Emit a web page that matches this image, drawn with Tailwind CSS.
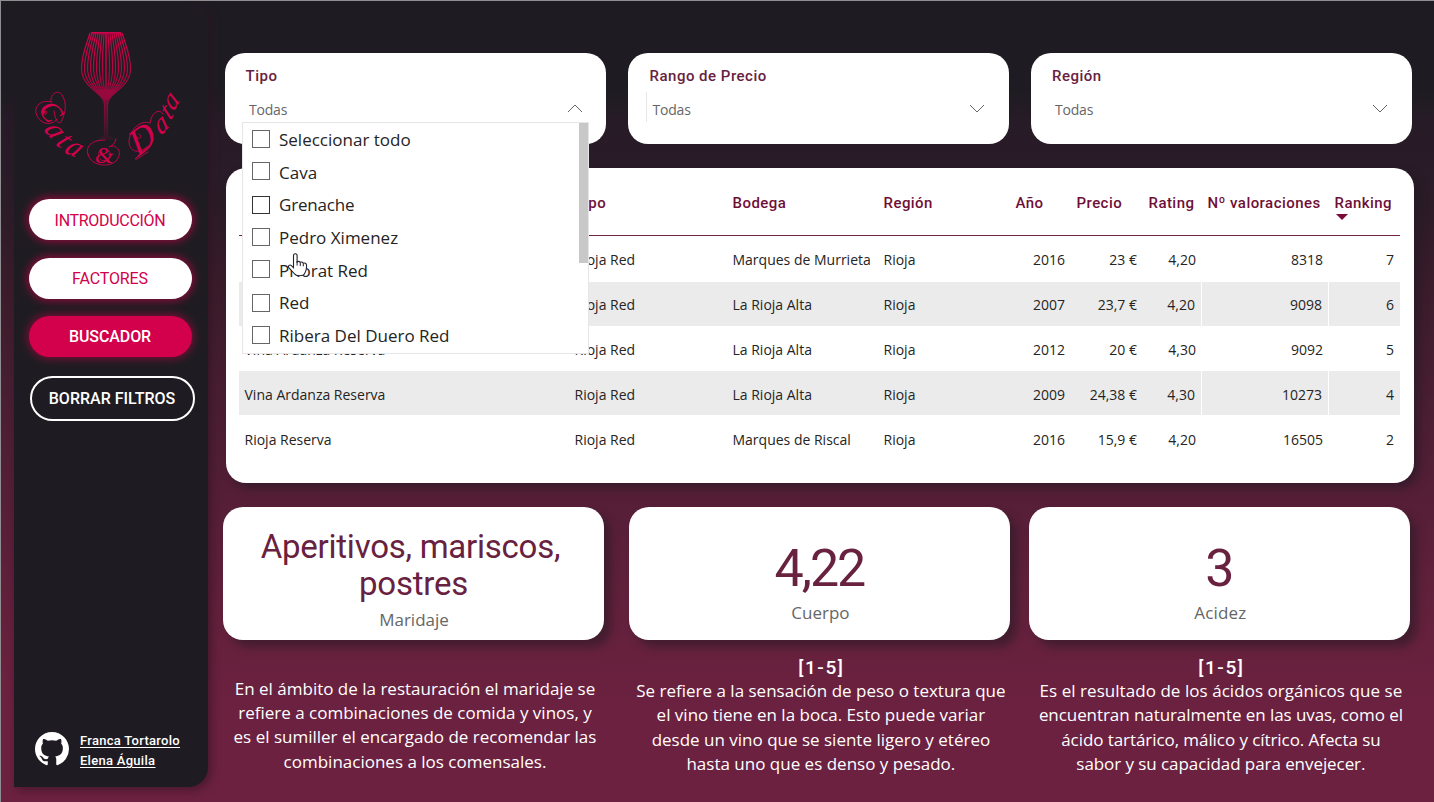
<!DOCTYPE html>
<html lang="es">
<head>
<meta charset="utf-8">
<title>Cata &amp; Data – Buscador</title>
<script src="https://cdn.jsdelivr.net/npm/@tailwindcss/browser@4"></script>
</head>
<body class="h-[802px] w-[1434px] overflow-hidden">
<div class="relative flex h-[802px] w-[1434px] overflow-hidden border-l border-t border-[#8f8f92] bg-[linear-gradient(180deg,#1e1c22_0px,#1e1c22_90px,#271b27_120px,#2b1c28_200px,#3a1c2b_280px,#4a1e33_400px,#581f38_520px,#66213d_640px,#6c2140_720px,#6c2140_802px)] font-['Open_Sans','Noto_Sans',sans-serif]">

  <!-- Sidebar -->
  <aside class="ml-[13px] flex h-[786px] w-[194px] shrink-0 flex-col rounded-br-[20px] rounded-tr-[20px] bg-[#1e1c22] font-['Roboto',sans-serif] shadow-[3px_3px_10px_rgba(45,18,34,0.6)]">
    <svg class="h-[184px] w-[194px] shrink-0" viewBox="14 1 194 184" fill="none">
      <defs>
        <linearGradient id="g" x1="0" y1="30" x2="0" y2="140" gradientUnits="userSpaceOnUse"><stop offset="0" stop-color="#d3004b"/><stop offset=".45" stop-color="#ad0541"/><stop offset=".65" stop-color="#8f0a3c"/><stop offset="1" stop-color="#35182a"/></linearGradient>
      </defs>
      <g stroke="url(#g)" stroke-width="1.200">
        <path d="M91 32.800H121" stroke-width="1.600"/>
        <path d="M90 33C86 46 81 56 81.500 70C82.500 85 97 91 104.500 100V134"/>
        <path d="M92 33C88.500 46 84 56 84.500 70C85.500 85 99 91 104.800 100"/>
        <path d="M94 33C91 46 87 56 87.500 70C88.500 85 100 91 105 100"/>
        <path d="M96 33C93.500 46 90 56 90.500 70C91.500 85 101 91 105 100"/>
        <path d="M98 33C96 46 93 56 93.500 70C94.500 85 102 91 105.400 100"/>
        <path d="M100 33C98.500 46 96 56 96.500 70C97 85 103 91 105.600 100"/>
        <path d="M102 33C101 46 99 56 99.500 70C100 85 104 91 105.800 100"/>
        <path d="M104 33C103.500 46 102 56 102.500 70C102.500 85 105 91 106 100"/>
        <path d="M122 33C126 46 131 56 130.500 70C129.500 85 115 91 107.500 100V134"/>
        <path d="M120 33C123.500 46 128 56 127.500 70C126.500 85 113 91 107.200 100"/>
        <path d="M118 33C121 46 125 56 124.500 70C123.500 85 112 91 107 100"/>
        <path d="M116 33C118.500 46 122 56 121.500 70C120.500 85 111 91 107 100"/>
        <path d="M114 33C116 46 119 56 118.500 70C117.500 85 110 91 106.600 100"/>
        <path d="M112 33C113.500 46 116 56 115.500 70C115 85 109 91 106.400 100"/>
        <path d="M110 33C111 46 113 56 112.500 70C112 85 108 91 106.200 100"/>
        <path d="M108 33C108.500 46 110 56 109.500 70C109.500 85 107 91 106 100"/>
        <path d="M106 33V96" stroke-width="1.600"/>
      </g>
      <path d="M95 91Q106 87 117 91Q107.500 99 107.500 110L108 134Q110 138 120 141Q106 138 93 141Q102 138 104 134L104.500 110Q104.500 99 95 91Z" fill="url(#g)" opacity=".65"/>
      <g class="font-['Liberation_Serif',serif] italic" fill="#d3004b" text-anchor="middle">
        <text font-size="29" transform="translate(43 117) rotate(54)">C</text>
        <text font-size="29" transform="translate(47.500 135) rotate(46) skewX(-14)">a</text>
        <text font-size="29" transform="translate(57.500 146.500) rotate(34) skewX(-14)">t</text>
        <text font-size="29" transform="translate(69.500 155) rotate(22) skewX(-14)">a</text>
        <text font-size="24" transform="translate(104 162.500)">&amp;</text>
        <text font-size="36" transform="translate(148 149) rotate(-38) skewX(-8)">D</text>
        <text font-size="27" transform="translate(165.500 131) rotate(-48) skewX(-14)">a</text>
        <text font-size="27" transform="translate(172 118) rotate(-56) skewX(-14)">t</text>
        <text font-size="27" transform="translate(177 106) rotate(-62) skewX(-14)">a</text>
      </g>
      <g stroke="#d3004b" stroke-width=".9" stroke-linecap="round">
        <path d="M43 112.500C44 116 49 114 46 110.500M51 101C50 94 58 89 62 95C67 103 66 112 61 122C58 125 55 119 54 111M52 102C43 99 34 105 36 113C39 124 51 127 57 119"/>
        <circle cx="43.500" cy="112" r="1.300" fill="#d3004b"/>
        <path d="M88 155C85 145 93 140 105 140M88 154C90 166 109 168 116 161C123 153 118 145 111 146M109 147Q115 145 116 139M99 156C97 148 105 147 109 151C114 158 104 164 100 159"/>
        <path d="M150 123C152 110 161 109 163 114M150 123C140 119 129 131 129 142C130 153 140 154 148 146M139 134C143 136 139 141 137 137M148 146C143 152 138 156 135 159C138 160 143 154 148 152"/>
      </g>
    </svg>
    <nav class="mt-[14px] flex flex-col pl-[14.500px] text-center text-[16px]">
      <a class="h-[41px] w-[163px] rounded-full bg-white leading-[43px] tracking-[-0.3px] text-[#d3004b] shadow-[0_0_9px_2px_rgba(211,0,75,0.62)]">INTRODUCCIÓN</a>
      <a class="mt-[17.500px] h-[41px] w-[163px] rounded-full bg-white leading-[42px] tracking-[-0.1px] text-[#d3004b] shadow-[0_0_9px_2px_rgba(211,0,75,0.62)]">FACTORES</a>
      <a class="mt-[17.500px] h-[41px] w-[163px] rounded-full bg-[#d3004b] font-medium leading-[41px] tracking-[-0.1px] text-white shadow-[0_0_9px_2px_rgba(211,0,75,0.5)]">BUSCADOR</a>
      <a class="ml-px mt-[19px] h-[45px] w-[165px] rounded-full border-2 border-white font-medium leading-[41px] text-white">BORRAR FILTROS</a>
    </nav>
    <div class="mb-[16px] ml-[21px] mt-auto flex items-center gap-[11px]">
      <svg class="mb-px h-[34px] w-[34px]" viewBox="0 0 16 16" fill="#fff"><path fill-rule="evenodd" d="M8 0C3.580 0 0 3.580 0 8c0 3.540 2.290 6.530 5.470 7.590.4.070.55-.17.55-.38 0-.19-.01-.82-.01-1.490-2.010.37-2.530-.49-2.690-.94-.09-.23-.48-.94-.82-1.130-.28-.15-.68-.52-.01-.53.63-.01 1.080.58 1.230.82.72 1.210 1.870.87 2.330.66.070-.52.28-.87.51-1.070-1.780-.2-3.640-.89-3.640-3.950 0-.87.31-1.590.82-2.150-.08-.2-.36-1.020.08-2.120 0 0 .67-.21 2.200.82.64-.18 1.320-.27 2-.27s1.360.09 2 .27c1.530-1.040 2.200-.82 2.200-.82.44 1.100.16 1.920.08 2.120.51.56.82 1.270.82 2.150 0 3.070-1.870 3.750-3.650 3.950.29.25.54.73.54 1.480 0 1.070-.01 1.930-.01 2.200 0 .21.15.46.55.38A8.010 8.010 0 0 0 16 8c0-4.420-3.580-8-8-8Z"/></svg>
      <div class="flex flex-col pt-[3px] text-[13px] font-medium leading-[20px] tracking-[0.28px] text-white underline underline-offset-2"><a>Franca Tortarolo</a><a>Elena Águila</a></div>
    </div>
  </aside>

  <main class="flex flex-col pt-[52px]">
    <!-- Filters -->
    <section class="ml-[16.500px] flex gap-[22px]">
      <div class="relative h-[90.500px] w-[381.500px] rounded-[20px] bg-white">
        <h2 class="ml-[21px] mt-[12px] font-['Roboto',sans-serif] text-[15px] font-medium leading-[22px] tracking-[0.5px] text-[#68213f]">Tipo</h2>
        <div class="ml-[24.500px] mr-[23px] mt-[12px] flex items-center justify-between text-[14px] leading-[20px] tracking-[-0.2px] text-[#666]"><span class="pt-px">Todas</span>
          <svg class="mb-[2px] h-[9px] w-[16px]" viewBox="0 0 16 9" fill="none" stroke="#666"><path d="M1 8l7-7 7 7"/></svg>
        </div>
        <!-- Open list -->
        <div class="absolute left-[17.500px] top-[69px] z-10 flex h-[232px] w-[347px] justify-between border border-[#e6e6e6] bg-white">
          <ul class="flex flex-col pl-[9px] text-[17px] text-[#252423]">
            <li class="flex h-[32.650px] items-center gap-[9px]"><i class="h-[18px] w-[18px] border border-[#666]"></i>Seleccionar todo</li>
            <li class="flex h-[32.650px] items-center gap-[9px]"><i class="mb-px h-[18px] w-[18px] border border-[#666]"></i><span class="pt-px">Cava</span></li>
            <li class="flex h-[32.650px] items-center gap-[9px]"><i class="mt-px h-[18px] w-[18px] border border-[#333]"></i><span class="pt-px tracking-[-0.2px]">Grenache</span></li>
            <li class="flex h-[32.650px] items-center gap-[9px]"><i class="h-[18px] w-[18px] border border-[#666]"></i><span class="pt-px">Pedro Ximenez</span></li>
            <li class="flex h-[32.650px] items-center gap-[9px]"><i class="mb-px h-[18px] w-[18px] border border-[#666]"></i><span class="pt-px">Priorat Red</span></li>
            <li class="flex h-[32.650px] items-center gap-[9px]"><i class="h-[18px] w-[18px] border border-[#666]"></i>Red</li>
            <li class="flex h-[32.650px] items-center gap-[9px]"><i class="h-[18px] w-[18px] border border-[#666]"></i><span class="pt-px">Ribera Del Duero Red</span></li>
          </ul>
          <div class="h-[140px] w-[9px] bg-[#c8c8c8]"></div>
          <!-- Hand pointer -->
          <svg class="absolute left-[43.500px] top-[129.500px] h-[25px] w-[22px]" viewBox="0 0 22 25"><path d="M6.500 2.500a1.800 1.800 0 0 1 3.600 0V9q1.700-1.300 3.200.3 2-.8 3 .9 2.700-.8 3.200 1.700c.3 4-.2 6-1.700 8.300q-.8 2.600-5.300 2.600-3.800 0-5.300-2.300L2 14.800c-1.500-2 .8-3.600 2.400-2.200l2.100 2Z" fill="#fff" stroke="#222230" stroke-width="1.100"/><path d="M10.100 8v4.500M13.300 9.500V13M16.300 10.300v3" stroke="#222230" stroke-width="1"/></svg>
        </div>
      </div>
      <div class="h-[90.500px] w-[381px] rounded-[20px] bg-white">
        <h2 class="ml-[21.500px] mt-[12px] font-['Roboto',sans-serif] text-[15px] font-medium leading-[22px] tracking-[0.5px] text-[#68213f]">Rango de Precio</h2>
        <div class="ml-[18px] mr-[24px] mt-[5px] flex h-[30px] items-center justify-between border-l border-[#e6e6e6] pb-px pl-[5.500px] pt-[5px] text-[14px] leading-[20px] tracking-[-0.2px] text-[#666]"><span class="pt-px">Todas</span>
          <svg class="mb-[2px] h-[9px] w-[16px]" viewBox="0 0 16 9" fill="none" stroke="#666"><path d="M1 1l7 7 7-7"/></svg>
        </div>
      </div>
      <div class="h-[90.500px] w-[381px] rounded-[20px] bg-white">
        <h2 class="ml-[21px] mt-[12px] font-['Roboto',sans-serif] text-[15px] font-medium leading-[22px] tracking-[0.5px] text-[#68213f]">Región</h2>
        <div class="ml-[24px] mr-[24px] mt-[12px] flex items-center justify-between text-[14px] leading-[20px] tracking-[-0.2px] text-[#666]"><span class="pt-px">Todas</span>
          <svg class="mb-[2px] h-[9px] w-[16px]" viewBox="0 0 16 9" fill="none" stroke="#666"><path d="M1 1l7 7 7-7"/></svg>
        </div>
      </div>
    </section>

    <!-- Wines -->
    <section class="ml-[18px] mt-[24.500px] h-[314.500px] w-[1187.500px] rounded-[20px] bg-white pl-[13px] shadow-[5px_5px_10px_rgba(30,24,34,0.55)]">
      <table class="w-[1161px] table-fixed border-separate border-spacing-0 text-[14px] text-[#252423]">
        <colgroup><col class="w-[330px]"><col class="w-[158px]"><col class="w-[151px]"><col class="w-[132px]"><col class="w-[61px]"><col class="w-[72px]"><col class="w-[59px]"><col class="w-[127px]"><col class="w-[71px]"></colgroup>
        <thead>
          <tr class="h-[68px] text-left font-['Roboto',sans-serif] text-[15px] tracking-[0.45px] text-[#6f0f38] [&>th]:border-b [&>th]:border-[#6f2440] [&>th]:p-0 [&>th]:pl-[5.500px] [&>th]:pt-[3px] [&>th]:font-medium">
            <th></th><th>Tipo</th><th>Bodega</th><th>Región</th><th>Año</th><th>Precio</th><th>Rating</th><th class="whitespace-nowrap">Nº valoraciones</th><th><div class="relative">Ranking<svg class="absolute left-px top-[22px] h-[6px] w-[12px]" viewBox="0 0 12 6" fill="#7a0a38"><path d="M0 0h12L6 6z"/></svg></div></th>
          </tr>
        </thead>
        <tbody class="[&_td]:whitespace-nowrap [&_td]:p-0 [&_td]:pl-[5.500px] [&_td]:pt-[2px] [&_td]:leading-[20px] [&_td:nth-child(n+5)]:pr-[6px] [&_td:nth-child(n+5)]:text-right">
          <tr class="h-[45px]"><td></td><td>Rioja Red</td><td>Marques de Murrieta</td><td>Rioja</td><td>2016</td><td>23 €</td><td>4,20</td><td>8318</td><td>7</td></tr>
          <tr class="h-[45px] [&>td]:border-t [&>td]:border-white [&>td]:bg-[#ebebeb] [&>td:nth-child(7)]:border-r [&>td:nth-child(8)]:border-r"><td></td><td>Rioja Red</td><td>La Rioja Alta</td><td>Rioja</td><td>2007</td><td>23,7 €</td><td>4,20</td><td>9098</td><td>6</td></tr>
          <tr class="h-[45px]"><td>Vina Ardanza Reserva</td><td>Rioja Red</td><td>La Rioja Alta</td><td>Rioja</td><td>2012</td><td>20 €</td><td>4,30</td><td>9092</td><td>5</td></tr>
          <tr class="h-[45px] [&>td]:border-b [&>td]:border-white [&>td]:bg-[#ebebeb] [&>td]:pt-[3px]! [&>td:nth-child(7)]:border-r [&>td:nth-child(8)]:border-r"><td>Vina Ardanza Reserva</td><td>Rioja Red</td><td>La Rioja Alta</td><td>Rioja</td><td>2009</td><td>24,38 €</td><td>4,30</td><td>10273</td><td>4</td></tr>
          <tr class="h-[45px]"><td>Rioja Reserva</td><td>Rioja Red</td><td>Marques de Riscal</td><td>Rioja</td><td>2016</td><td>15,9 €</td><td>4,20</td><td>16505</td><td>2</td></tr>
        </tbody>
      </table>
    </section>

    <!-- Result cards -->
    <section class="ml-[15px] mt-[24px] flex text-center">
      <div class="mr-[25.400px] w-[381px]">
        <div class="h-[133.500px] rounded-[20px] bg-white pt-[21px] shadow-[7px_7px_9px_rgba(44,26,38,0.6)]">
          <p class="pr-[6px] font-['Roboto',sans-serif] text-[33px] leading-[37px] tracking-[-0.25px] text-[#68213f]">Aperitivos, mariscos,</p>
          <p class="font-['Roboto',sans-serif] text-[33px] leading-[37px] tracking-[-0.25px] text-[#68213f]">postres</p>
          <p class="mt-[6px] pl-px text-[17px] leading-[23px] text-[#666]">Maridaje</p>
        </div>
        <p class="mt-[36.800px] whitespace-nowrap pl-[3px] text-[17px] leading-[24.300px] text-white">En el ámbito de la restauración el maridaje se<br>refiere a combinaciones de comida y vinos, y<br>es el sumiller el encargado de recomendar las<br>combinaciones a los comensales.</p>
      </div>
      <div class="mr-[19px] w-[381px]">
        <div class="h-[133.500px] rounded-[20px] bg-white pt-[32px] shadow-[7px_7px_9px_rgba(44,26,38,0.6)]">
          <p class="pr-px font-['Roboto',sans-serif] text-[52px] leading-[60px] tracking-[-2px] text-[#68213f]">4,22</p>
          <p class="mt-[2px] pl-px text-[17px] leading-[24px] text-[#666]">Cuerpo</p>
        </div>
        <p class="mt-[15.500px] pl-[3px] font-['Roboto',sans-serif] text-[19px] font-medium leading-[24px] tracking-[1.600px] text-white">[1-5]</p>
        <p class="mt-[-0.500px] whitespace-nowrap pl-[2px] text-[17px] leading-[24.300px] text-white">Se refiere a la sensación de peso o textura que<br>el vino tiene en la boca. Esto puede variar<br>desde un vino que se siente ligero y etéreo<br>hasta uno que es denso y pesado.</p>
      </div>
      <div class="w-[381px]">
        <div class="h-[133.500px] rounded-[20px] bg-white pt-[32px] shadow-[7px_7px_9px_rgba(44,26,38,0.6)]">
          <p class="font-['Roboto',sans-serif] text-[52px] leading-[60px] text-[#68213f]">3</p>
          <p class="mt-[2px] pl-px text-[17px] leading-[24px] tracking-[0.2px] text-[#666]">Acidez</p>
        </div>
        <p class="mt-[15.500px] pl-[3px] font-['Roboto',sans-serif] text-[19px] font-medium leading-[24px] tracking-[1.600px] text-white">[1-5]</p>
        <p class="mt-[-0.500px] whitespace-nowrap pl-[2px] text-[17px] leading-[24.300px] tracking-[-0.07px] text-white"><span class="tracking-[0.05px]">Es el resultado de los ácidos orgánicos que se</span><br>encuentran naturalmente en las uvas, como el<br>ácido tartárico, málico y cítrico. Afecta su<br>sabor y su capacidad para envejecer.</p>
      </div>
    </section>
  </main>
</div>
</body>
</html>
